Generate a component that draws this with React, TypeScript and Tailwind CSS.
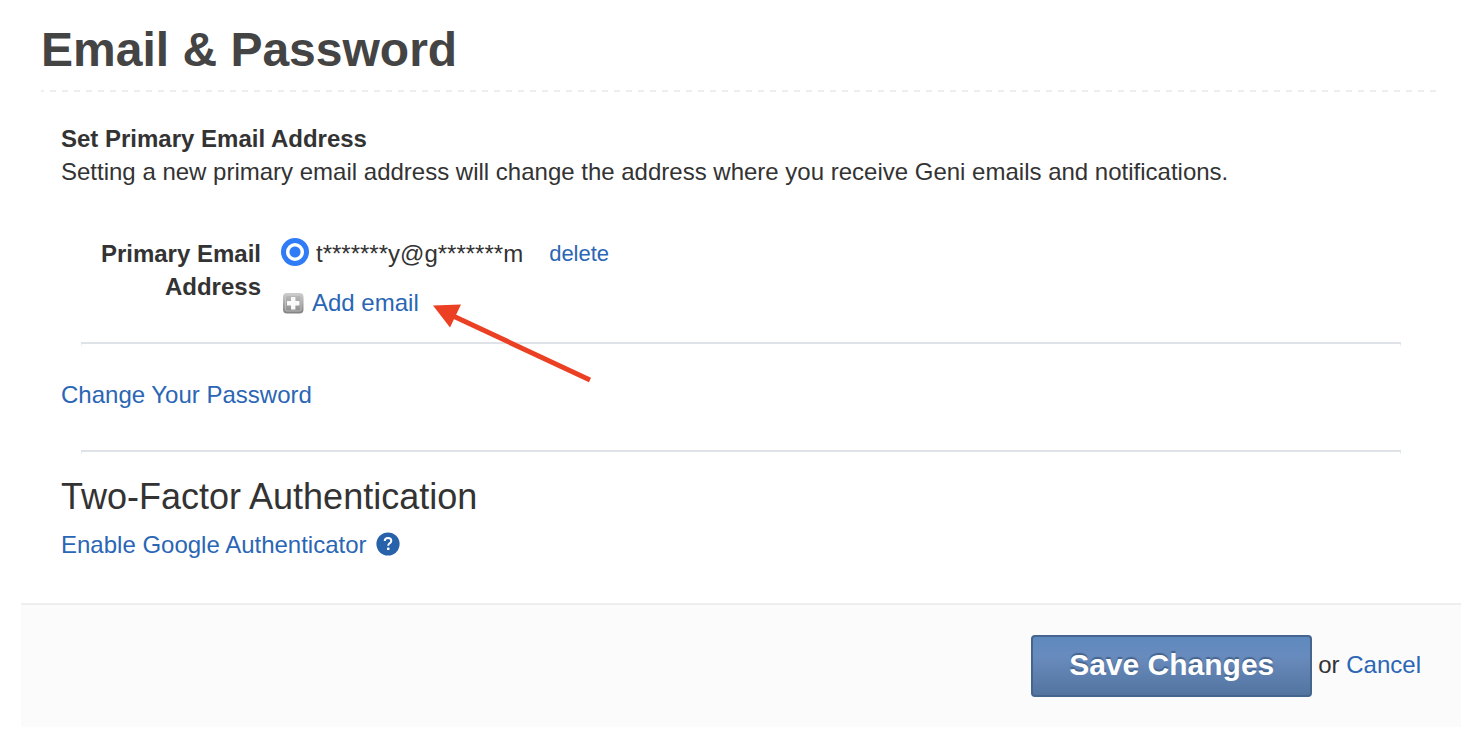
import React, { useState } from 'react';

const linkClass = 'text-[#2a66b5] hover:underline';

const Divider = () => (
    <div className="mx-5">
        <div className="h-[2px] bg-[#dfe3e7]" />
        <div className="flex justify-between">
            <span className="w-px h-[2px] bg-[#eceef0]" />
            <span className="w-px h-[2px] bg-[#eceef0]" />
        </div>
    </div>
);

const AddIcon = () => (
    <svg width="24" height="22" viewBox="0 0 24 22" fill="none" aria-hidden="true">
        <defs>
            <linearGradient id="add-fill" x1="0" y1="0" x2="0" y2="1">
                <stop offset="0" stopColor="#bdbdbd" />
                <stop offset="1" stopColor="#8c8c8c" />
            </linearGradient>
            <linearGradient id="add-edge" x1="0" y1="0" x2="0" y2="1">
                <stop offset="0" stopColor="#cccccc" />
                <stop offset="1" stopColor="#858585" />
            </linearGradient>
        </defs>
        <rect x="3" y="2" width="18.5" height="18.5" rx="3" fill="url(#add-fill)" stroke="url(#add-edge)" strokeWidth="2" />
        <rect x="4.5" y="3.5" width="15.5" height="15.5" rx="1.5" stroke="#d0d0d0" strokeOpacity="0.6" />
        <path d="M10 5h4.4v4h4v4.4h-4v4H10v-4H6V9h4z" fill="#fafafa" />
    </svg>
);

const HelpIcon = () => (
    <svg width="24" height="24" viewBox="0 0 24 24" fill="none" aria-hidden="true">
        <circle cx="12" cy="12" r="11.6" fill="#2862ab" />
        <path
            d="M8.7 9C8.8 7 10.2 5.9 12.1 5.9c1.9 0 3.2 1.1 3.2 2.8 0 1.2-.6 1.9-1.7 2.6-1 .7-1.4 1.1-1.4 2.4"
            stroke="white"
            strokeWidth="2"
        />
        <rect x="11" y="15.5" width="2.5" height="2.5" rx="0.6" fill="white" />
    </svg>
);

const Arrow = () => (
    <svg width="160" height="80" viewBox="0 0 160 80" aria-hidden="true">
        <path d="M18 11L157 76" stroke="#ec4024" strokeWidth="5" />
        <path d="M0 1.5L28 0.6L17 23.4z" fill="#ec4024" />
    </svg>
);

const App: React.FC = () => {
    const [primary, setPrimary] = useState('current');

    return (
        <form
            className="bg-white text-[#333333] pl-[21px] pr-[9px] pt-5 pb-3 font-['Liberation_Sans',Arial,sans-serif] text-[24px] leading-[33px]"
            onSubmit={(e) => e.preventDefault()}
        >
            {/* Header */}
            <div className="px-5">
                <h1 className="text-[48px] leading-[60px] pb-[10px] font-bold text-[#444444]">Email &amp; Password</h1>
                <div className="h-[2px] bg-[repeating-linear-gradient(90deg,#eeeeee_0px_3px,transparent_3px_9px,#eeeeee_9px_12px)]" />
            </div>

            <div className="px-10 pt-[30px]">
                {/* Primary email */}
                <h2 className="font-bold">Set Primary Email Address</h2>
                <p>Setting a new primary email address will change the address where you receive Geni emails and notifications.</p>

                <div className="flex gap-5 px-5 pt-[49px] pb-[23px]">
                    <div id="primary-label" className="w-[180px] text-right font-bold">Primary Email Address</div>
                    <div className="relative flex flex-col gap-4" role="radiogroup" aria-labelledby="primary-label">
                        <div className="flex items-center">
                            <label className="flex items-center gap-[7px]">
                                <input
                                    type="radio"
                                    name="primary"
                                    value="current"
                                    checked={primary === 'current'}
                                    onChange={(e) => setPrimary(e.target.value)}
                                    className="appearance-none w-7 h-7 mb-1 rounded-full border-[5px] border-[#307bf6] checked:bg-[radial-gradient(circle,#307bf6_5px,white_6px)]"
                                />
                                t*******y@g*******m
                            </label>
                            <a href="#delete" className={`ml-[26px] text-[22px] ${linkClass}`}>delete</a>
                        </div>
                        <a href="#add-email" className={`flex items-center gap-[7px] ${linkClass}`}>
                            <AddIcon />
                            Add email
                        </a>
                        <div className="absolute left-[152px] top-[67px] pointer-events-none">
                            <Arrow />
                        </div>
                    </div>
                </div>
                <Divider />

                {/* Password */}
                <div className="pt-8 pb-[39px]">
                    <a href="#password" className={linkClass}>Change Your Password</a>
                </div>
                <Divider />

                {/* Two factor */}
                <h2 className="pt-[23px] text-[36px] leading-10">Two-Factor Authentication</h2>
                <div className="flex items-center gap-[9px] pt-[11px] pb-[42px]">
                    <a href="#authenticator" className={linkClass}>Enable Google Authenticator</a>
                    <button type="button" aria-label="Help" className="pb-[2px]">
                        <HelpIcon />
                    </button>
                </div>
            </div>

            {/* Footer */}
            <div className="flex items-center justify-end border-t-2 border-[#eeeeee] bg-[#fbfbfb] px-10 py-[30px]">
                <button
                    type="submit"
                    className="h-[62px] px-9 pb-1 mr-[6px] rounded-[4px] border-2 border-[#45658f] bg-[linear-gradient(#5f8abf,#688bbd_35%,#53749f)] text-[30px] font-bold text-white [text-shadow:0_-2px_1px_#45658f]"
                >
                    Save Changes
                </button>
                <span className="pb-1">
                    or <a href="#cancel" className={linkClass}>Cancel</a>
                </span>
            </div>
        </form>
    );
};

export default App;
